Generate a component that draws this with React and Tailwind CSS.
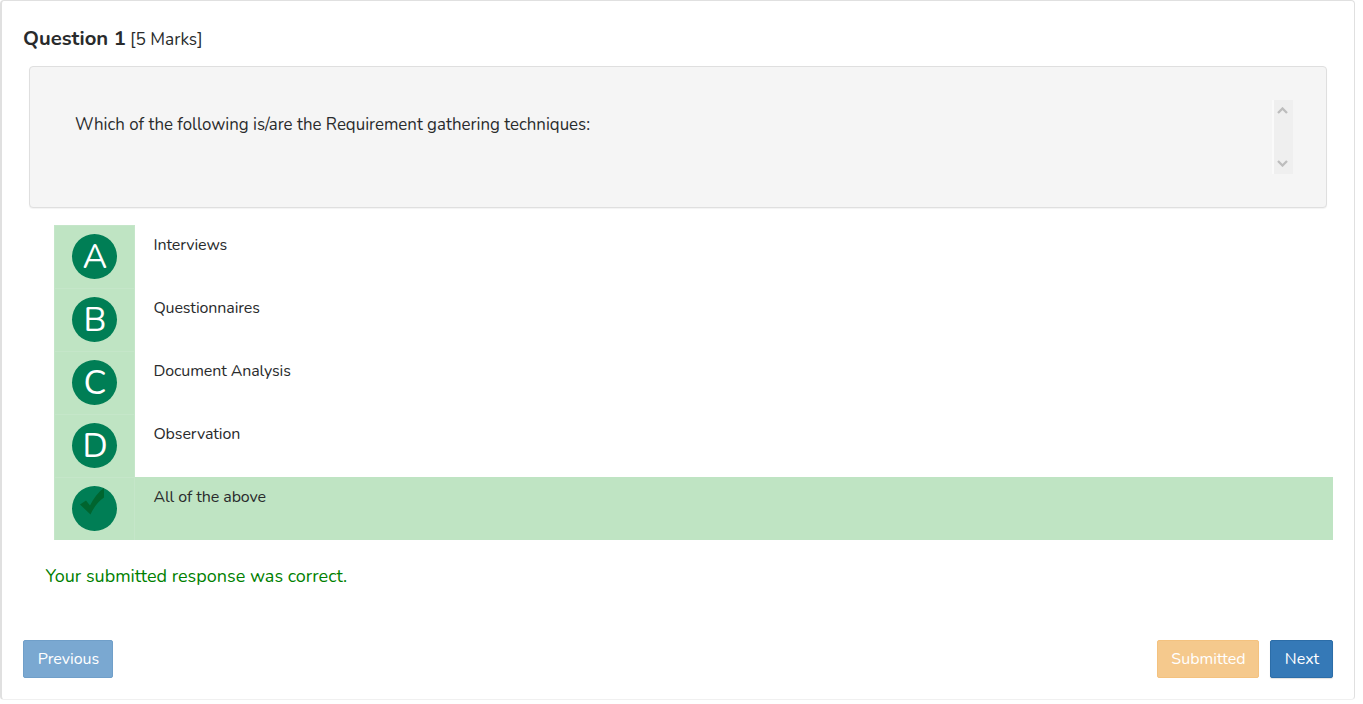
import React from 'react';

const options = [
  { letter: 'A', label: 'Interviews' },
  { letter: 'B', label: 'Questionnaires' },
  { letter: 'C', label: 'Document Analysis' },
  { letter: 'D', label: 'Observation' },
  { letter: 'E', label: 'All of the above', selected: true },
];

function Check() {
  return (
    <svg className="mt-[-14px] mr-[4px] h-[27px] w-[25px]" viewBox="0 0 25 27" aria-hidden="true">
      <path d="M0 16.5L6 12.5L10 17.5C13.5 10 18.5 4 24 0V9.5C18 13.5 14 19 10.5 26.5Z" fill="#00652f" />
    </svg>
  );
}

function Option({ letter, label, selected }) {
  return (
    <li className="flex h-[63px]">
      <div className="flex w-[81px] shrink-0 justify-center border border-b-0 border-[#c5e6c9] bg-[#bfe4c3] pt-2">
        <div className="flex size-[45px] items-center justify-center rounded-full bg-[#007e55] text-[34px] leading-none text-white">
          {selected ? <Check /> : <span className="pl-px">{letter}</span>}
        </div>
      </div>
      <div className={selected ? 'grow bg-[#bfe4c3] pt-2 pl-[18.4px]' : 'grow pt-2 pl-[18.4px]'}>
        <span className="text-[16px] leading-6 tracking-[-0.1px]">{label}</span>
      </div>
    </li>
  );
}

export default function App() {
  return (
    <div className="h-[704px] bg-white pr-[8px] font-['Nunito','Lato',sans-serif] text-[#292b2c]">
      <main className="flex h-[700px] flex-col rounded-[4px] border border-l-2 border-[#e0e0e0] border-b-[#f0f0f0] pr-[21px] pl-[21px]">
        <h1 className="mt-[23px] flex h-[30px] items-center gap-[4px] leading-[30px]">
          <span className="pb-[2px] text-[20.3px] font-bold">Question 1</span>
          <span className="origin-left scale-x-[0.96] text-[18px]">[5 Marks]</span>
        </h1>
        <section className="mt-[12px] mr-[6px] ml-[6px] flex h-[142px] shrink-0 justify-between rounded-[4px] border border-[#dfdfdf] bg-[#f5f5f5] pt-[33px] pr-[33px] pl-[45px] shadow-[0_1px_1px_#0000000d]">
          <p className="origin-left scale-x-[0.936] pt-[11px] text-[18px] leading-[26px] whitespace-nowrap">
            Which of the following is/are the Requirement gathering techniques:
          </p>
          <div className="flex h-[74px] w-[21px] flex-col items-center justify-between border-l-2 border-[#fafafa] bg-[#efefef] pt-[7px] pr-[2px] pb-[7px]">
            <svg className="h-[7px] w-[11px]" viewBox="0 0 11 7" fill="none" stroke="#bdbdbd" strokeWidth="2.3"><path d="M1 6L5.5 1.5L10 6" /></svg>
            <svg className="h-[7px] w-[11px]" viewBox="0 0 11 7" fill="none" stroke="#bdbdbd" strokeWidth="2.3"><path d="M1 1L5.5 5.5L10 1" /></svg>
          </div>
        </section>
        <ul className="mt-[17px] ml-[31px]">
          {options.map((o) => <Option key={o.letter} {...o} />)}
        </ul>
        <p className="mt-[23px] ml-[22.4px] text-[18px] leading-[26px] text-[#008000]">
          <span>Your submitted response was correct.</span>
        </p>
        <footer className="mt-[51px] flex h-[38px] shrink-0 gap-[11px] text-[16px] text-white">
          <button className="mr-auto w-[90px] rounded-[2px] border border-[#709fc9] bg-[#7aa8d1] pl-px">Previous</button>
          <button className="w-[102px] rounded-[2px] border border-[#f4c27f] bg-[#f5c98d] pl-px">Submitted</button>
          <button className="w-[63px] rounded-[2px] border border-[#2c6da8] bg-[#3579b7] pl-px shadow-[0_1px_1px_#00000020]">Next</button>
        </footer>
      </main>
    </div>
  );
}
